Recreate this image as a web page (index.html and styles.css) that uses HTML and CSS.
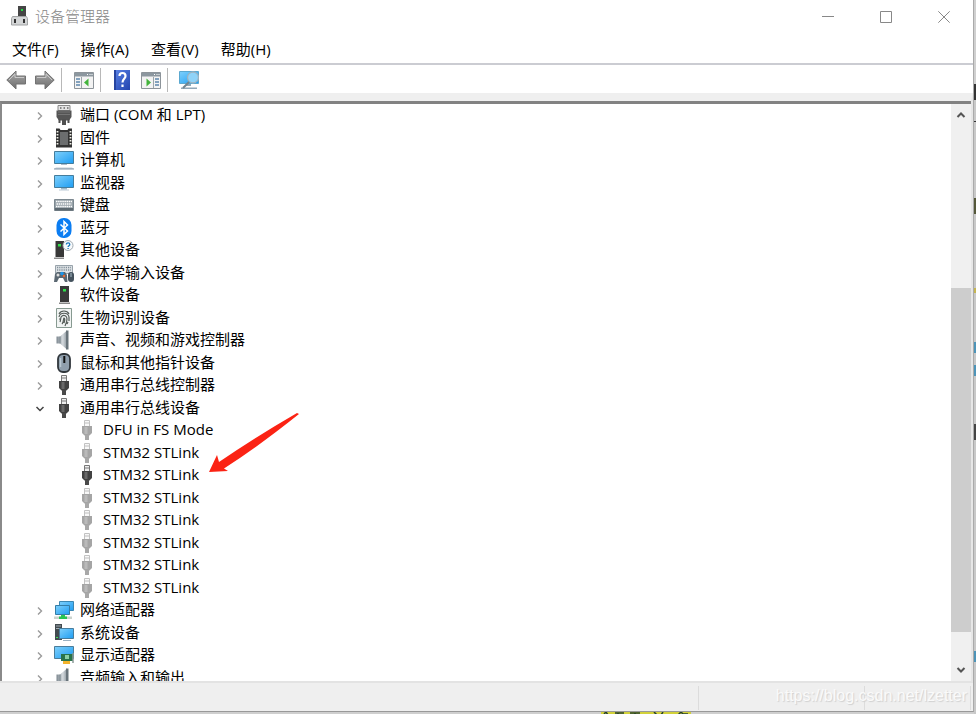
FILE: index.html
```
<!DOCTYPE html>
<html lang="zh-CN">
<head>
    <meta charset="UTF-8">
    <meta name="viewport" content="width=device-width, initial-scale=1.0">
    <title>设备管理器</title>
    <link rel="stylesheet" href="styles.css">
</head>

<body>

    <!-- shared icons -->
    <svg class="icon-defs" aria-hidden="true">
        <defs>
            <linearGradient id="screen" x1="0" y1="0" x2="1" y2="1">
                <stop offset="0" stop-color="#7fd0fb"/>
                <stop offset="1" stop-color="#1e9df3"/>
            </linearGradient>
            <linearGradient id="metal" x1="0" y1="0" x2="0" y2="1">
                <stop offset="0" stop-color="#aaa"/>
                <stop offset="1" stop-color="#6c6c6c"/>
            </linearGradient>
            <linearGradient id="cone" x1="0" y1="0" x2="1" y2="0">
                <stop offset="0" stop-color="#7c878f"/>
                <stop offset="0.6" stop-color="#d5dade"/>
                <stop offset="1" stop-color="#8d979e"/>
            </linearGradient>
            <linearGradient id="book" x1="0" y1="0" x2="1" y2="1">
                <stop offset="0" stop-color="#5a83e6"/>
                <stop offset="1" stop-color="#2243ae"/>
            </linearGradient>
            <symbol id="right" viewBox="0 0 8 10"><path d="M2 1.500l3.500 3.500L2 8.500" fill="none" stroke="#9a9a9a" stroke-width="1.400"/></symbol>
            <symbol id="down" viewBox="0 0 10 8"><path d="M1.500 2L5 5.500 8.500 2" fill="none" stroke="#444" stroke-width="1.500"/></symbol>
            <symbol id="port" viewBox="0 0 20 20">
                <path d="M4 .5h12v5H4z" fill="#e4e4e4" stroke="#888"/>
                <path d="M6 3h1.500m2 0h1.500m2 0h1.500" stroke="#666" stroke-width="1.500"/>
                <path d="M2.500 5.500h15V12L15 15.500H5L2.500 12z" fill="#555"/>
                <path d="M4 7h12M4 9.500h12" stroke="#747474"/>
                <path d="M4.500 14h2v4h-2zM13.500 14h2v4h-2zM8 14h4v6H8z" fill="#505050"/>
            </symbol>
            <symbol id="firmware" viewBox="0 0 20 20">
                <path d="M2 .5h3.500l1 1.500h7l1-1.500H18v19H2z" fill="#333"/>
                <path d="M6 4h8v13H6z" fill="#6b6d6e"/>
                <path d="M3.500 3v15M16.500 3v15" stroke="#f2f2ea" stroke-width="1.800" stroke-dasharray="1.400 1.600"/>
            </symbol>
            <symbol id="monitor" viewBox="0 0 20 20">
                <path d="M.5 2.500h19v12H.5z" fill="url(#screen)" stroke="#447d9d"/>
                <path d="M7 15h6v1.500H7z" fill="#9cb7c9"/><path d="M5 16.500h10v1H5z" fill="#bccbd6"/>
            </symbol>
            <symbol id="computer" viewBox="0 0 20 20">
                <path d="M.5 1.500h19v12H.5z" fill="url(#screen)" stroke="#447d9d"/>
                <path d="M7 14h6v1H7z" fill="#abc"/>
                <path d="M2 17.500h16l2 1.500H0z" fill="#c2ced8"/><path d="M0 18.500h20v1H0z" fill="#8799a8"/>
            </symbol>
            <symbol id="keyboard" viewBox="0 0 20 20">
                <path d="M.5 4.500h19v11H.5z" fill="#98a3aa" stroke="#7c8890"/>
                <path d="M2 6.500h16M2.500 9h15M2 11.500h16" stroke="#fff" stroke-width="1.400" stroke-dasharray="1.500 .600"/>
                <path d="M1 13h18v2.500H1z" fill="#5d6971"/>
            </symbol>
            <symbol id="bluetooth" viewBox="0 0 20 20">
                <rect x="2.500" y="0" width="15" height="20" rx="7" fill="#0b7df2"/>
                <path d="M6.500 6.500l7 6.500-3.500 3.500v-13l3.500 3.500-7 6.500" fill="none" stroke="#fff" stroke-width="1.500"/>
            </symbol>
            <symbol id="unknown" viewBox="0 0 20 20">
                <path d="M1.500 1h8.500v16H1.500z" fill="#383838"/><path d="M0 17.500h10V19H0z" fill="#8b8b8b"/>
                <path d="M4 4h3v2.500H4z" fill="#32dd4a"/>
                <circle cx="14" cy="5.500" r="5" fill="#f7fafc" stroke="#a1aab1"/>
                <path d="M12.400 4.500c0-2.200 3.400-2.200 3.400 0 0 1.400-1.700 1.200-1.700 2.600m0 1v1" fill="none" stroke="#1676bd" stroke-width="1.300"/>
            </symbol>
            <symbol id="hid" viewBox="0 0 20 20">
                <path d="M1.500 2.500h17v8h-17z" fill="#dce1e4" stroke="#98a3ab"/>
                <path d="M3 4.500h14M3 7h14" stroke="#82909a" stroke-width="1.300" stroke-dasharray="1.200 1"/>
                <path d="M0 19l1-8 2-2h8l2 3 .5 7H11l-2-4H5l-2 4z" fill="#5b6872"/>
                <circle cx="4" cy="12" r="1.500" fill="#ddd"/><circle cx="8" cy="10.500" r="1.800" fill="#1d95e9"/><circle cx="10" cy="13" r="1.200" fill="#e76b34"/>
                <rect x="14" y="9" width="6" height="10" rx="3" fill="#44525d"/><path d="M17 10v4" stroke="#a9bdc9"/>
            </symbol>
            <symbol id="software" viewBox="0 0 20 20">
                <path d="M6 1h9v16H6z" fill="#3a3a3a"/><path d="M5 17.500h11V19H5z" fill="#888"/>
                <path d="M9 4h3v2.500H9z" fill="#2ee14a"/>
            </symbol>
            <symbol id="finger" viewBox="0 0 20 20">
                <path d="M2.500.5h15v19h-15z" fill="#f1f4f3" stroke="#879a91"/>
                <path d="M5 6c2-4 8-4 10 0M5 9c1-5 9-5 10 0v4M6 14c1-2 0-5 2-6 2-1.500 5 0 5 3 0 3-1 5-2 7M8 16c2-2 1-5 2-6 1 0 1 2 0 5M6 11H5m8 5l1-2" fill="none" stroke="#555d59" stroke-width="1.200"/>
            </symbol>
            <symbol id="speaker" viewBox="0 0 20 20">
                <path d="M2.500 6.500H6L13 .5v19l-7-6H2.500z" fill="url(#cone)"/>
                <path d="M12 .5h2.500v19H12z" fill="#69747b"/><path d="M6 6.500v7" stroke="#77838a"/>
            </symbol>
            <symbol id="mouse" viewBox="0 0 20 20">
                <rect x="4" y="1" width="12" height="18" rx="5" fill="#8f9eac" stroke="#30363b" stroke-width="1.800"/>
                <path d="M6.500 5v9" stroke="#bac8d3" stroke-width="1.500"/>
                <path d="M10.300 3v7" stroke="#111" stroke-width="2"/>
            </symbol>
            <symbol id="usb" viewBox="0 0 20 20">
                <path d="M7.500.5h5v6h-5z" fill="#eee" stroke="#777"/><path d="M8.500 3h1m1 0h1" stroke="#555" stroke-width="1.500"/>
                <path d="M5 6h10v7l-2.500 2.500h-5L5 13z" fill="#424242"/><path d="M7.500 7h3v7h-3z" fill="#696969"/>
                <path d="M8 15h4v5H8z" fill="#4a4a4a"/>
            </symbol>
            <symbol id="usb-off" viewBox="0 0 20 20">
                <path d="M7.500.5h5v6h-5z" fill="#f8f8f8" stroke="#c2c2c2"/><path d="M8.500 3h1m1 0h1" stroke="#aaa" stroke-width="1.500"/>
                <path d="M5 6h10v7l-2.500 2.500h-5L5 13z" fill="#a5a5a5"/><path d="M7.500 7h3v7h-3z" fill="#bababa"/>
                <path d="M8 15h4v5H8z" fill="#a8a8a8"/>
            </symbol>
            <symbol id="network" viewBox="0 0 20 20">
                <path d="M5.500 1.500h14v9h-14z" fill="url(#screen)" stroke="#3c87b2"/>
                <path d="M1.500 5.500h14v9h-14z" fill="url(#screen)" stroke="#347da7"/>
                <path d="M0 16.500h18V19H0z" fill="#cbd3ce"/><path d="M7 15h4v1.500h2V19H5v-2.500h2z" fill="#28c454"/>
            </symbol>
            <symbol id="system" viewBox="0 0 20 20">
                <path d="M1 1h7v16H1z" fill="#434b50"/><path d="M2 3h5M2 5.500h5" stroke="#a0aaaf"/><path d="M2 14h2v1H2z" fill="#41df54"/>
                <path d="M5.500 5.500h14v10h-14z" fill="url(#screen)" stroke="#487d9d"/>
                <path d="M9 17h8v1H9z" fill="#9bb2c2"/>
            </symbol>
            <symbol id="display" viewBox="0 0 20 20">
                <path d="M.5 1.500h19v12H.5z" fill="url(#screen)" stroke="#4b7d9a"/>
                <path d="M7 9h12v7H7z" fill="#29734a"/><path d="M11 10h4v4h-4z" fill="#8bd0a4"/><path d="M19 8v10" stroke="#8b9a98" stroke-width="1.500"/>
                <path d="M9 16h7v3H9z" fill="#f2b42b"/>
            </symbol>
            <symbol id="arrow" viewBox="0 0 20 20">
                <path d="M.8 10L10 1v5h9.500v8H10v5z" fill="url(#metal)" stroke="#737373" stroke-linejoin="round"/>
                <path d="M3 10l6-6v3.500h9" fill="none" stroke="#c8c8c8"/>
            </symbol>
            <symbol id="pane" viewBox="0 0 20 18">
                <path d="M.5 1.500h19v16H.5z" fill="#f3f3f3" stroke="#8d949a"/>
                <path d="M1 2h18v3.500H1z" fill="#8c979f"/><path d="M13 3.500h1m1.500 0h1m1 0h1" stroke="#fff"/>
            </symbol>
        </defs>
    </svg>

    <div class="window">
        <header class="title-bar">
            <svg class="app-icon" viewBox="0 0 18 20" aria-hidden="true">
                <path d="M7 0h8v12H7z" fill="#454545"/><path d="M10 3h2v2h-2z" fill="#23dd45"/>
                <path d="M1.500 10.500h14l1 2v6.500H.5v-6.500z" fill="#d4d6d7" stroke="#a2a4a5"/>
                <path d="M3 13h2v4H3zM12 13h2v4h-2z" fill="#333"/>
            </svg>
            <span class="title">设备管理器</span>
            <button class="window-button" aria-label="最小化"><svg viewBox="0 0 12 12"><path d="M0 5.500h12"/></svg></button>
            <button class="window-button" aria-label="最大化"><svg viewBox="0 0 12 12"><path d="M.5.5h11v11H.5z"/></svg></button>
            <button class="window-button" aria-label="关闭"><svg viewBox="0 0 12 12"><path d="M.3.3l11.400 11.400M11.700.3L.3 11.700"/></svg></button>
        </header>

        <nav class="menu">
            <button>文件(F)</button>
            <button>操作(A)</button>
            <button>查看(V)</button>
            <button>帮助(H)</button>
        </nav>

        <div class="toolbar">
            <div class="group nav-group">
                <button aria-label="后退"><svg><use href="#arrow"/></svg></button>
                <button aria-label="前进"><svg class="flip"><use href="#arrow"/></svg></button>
            </div>
            <div class="group">
                <button aria-label="显示控制台树"><svg viewBox="0 0 20 20"><use href="#pane" y="1" width="20" height="18"/><path d="M2 9h4M2 12h4M2 15h4" stroke="#5f88ad" stroke-width="1.500"/><path d="M7.500 7v11" stroke="#9ca5aa"/><path d="M14.500 8.500v8L10 12.500z" fill="#42b33b"/></svg></button>
            </div>
            <div class="group">
                <button aria-label="帮助"><svg viewBox="0 0 20 20"><path d="M2 0h16v20H2z" fill="url(#book)"/><path d="M2 0h2v20H2z" fill="#2745a0"/><path d="M7.500 6c0-4 6-4 6 0 0 3-3 2.500-3 6.500m0 2v2.500" fill="none" stroke="#fff" stroke-width="2.200"/></svg></button>
                <button aria-label="显示操作窗格"><svg viewBox="0 0 20 20"><use href="#pane" y="1" width="20" height="18"/><path d="M14 9h4M14 12h4M14 15h4" stroke="#5f88ad" stroke-width="1.500"/><path d="M12.500 7v11" stroke="#9ca5aa"/><path d="M5.500 8.500v8l4.500-4z" fill="#42b33b"/></svg></button>
            </div>
            <div class="group">
                <button aria-label="扫描检测硬件改动"><svg viewBox="0 0 20 20"><path d="M.5 1.500h19v12H.5z" fill="url(#screen)" stroke="#5ba8d0"/><path d="M7 14h5v2H7zM2 17.500h16V19H2z" fill="#91a8b8"/><circle cx="14" cy="7.500" r="5.500" fill="#8fd3f8" stroke="#9cb3c1" stroke-width="1.300"/><path d="M10 12l-6 6" stroke="#73848f" stroke-width="2"/></svg></button>
            </div>
        </div>

        <main class="content">
            <ul class="tree">
                <li><svg class="toggle"><use href="#right"/></svg><svg class="icon"><use href="#port"/></svg><span>端口 (COM 和 LPT)</span></li>
                <li><svg class="toggle"><use href="#right"/></svg><svg class="icon"><use href="#firmware"/></svg><span>固件</span></li>
                <li><svg class="toggle"><use href="#right"/></svg><svg class="icon"><use href="#computer"/></svg><span>计算机</span></li>
                <li><svg class="toggle"><use href="#right"/></svg><svg class="icon"><use href="#monitor"/></svg><span>监视器</span></li>
                <li><svg class="toggle"><use href="#right"/></svg><svg class="icon"><use href="#keyboard"/></svg><span>键盘</span></li>
                <li><svg class="toggle"><use href="#right"/></svg><svg class="icon"><use href="#bluetooth"/></svg><span>蓝牙</span></li>
                <li><svg class="toggle"><use href="#right"/></svg><svg class="icon"><use href="#unknown"/></svg><span>其他设备</span></li>
                <li><svg class="toggle"><use href="#right"/></svg><svg class="icon"><use href="#hid"/></svg><span>人体学输入设备</span></li>
                <li><svg class="toggle"><use href="#right"/></svg><svg class="icon"><use href="#software"/></svg><span>软件设备</span></li>
                <li><svg class="toggle"><use href="#right"/></svg><svg class="icon"><use href="#finger"/></svg><span>生物识别设备</span></li>
                <li><svg class="toggle"><use href="#right"/></svg><svg class="icon"><use href="#speaker"/></svg><span>声音、视频和游戏控制器</span></li>
                <li><svg class="toggle"><use href="#right"/></svg><svg class="icon"><use href="#mouse"/></svg><span>鼠标和其他指针设备</span></li>
                <li><svg class="toggle"><use href="#right"/></svg><svg class="icon"><use href="#usb"/></svg><span>通用串行总线控制器</span></li>
                <li><svg class="toggle"><use href="#down"/></svg><svg class="icon"><use href="#usb"/></svg><span>通用串行总线设备</span></li>
                <li class="child"><svg class="icon"><use href="#usb-off"/></svg><span>DFU in FS Mode</span></li>
                <li class="child"><svg class="icon"><use href="#usb-off"/></svg><span>STM32 STLink</span></li>
                <li class="child"><svg class="icon"><use href="#usb"/></svg><span>STM32 STLink</span></li>
                <li class="child"><svg class="icon"><use href="#usb-off"/></svg><span>STM32 STLink</span></li>
                <li class="child"><svg class="icon"><use href="#usb-off"/></svg><span>STM32 STLink</span></li>
                <li class="child"><svg class="icon"><use href="#usb-off"/></svg><span>STM32 STLink</span></li>
                <li class="child"><svg class="icon"><use href="#usb-off"/></svg><span>STM32 STLink</span></li>
                <li class="child"><svg class="icon"><use href="#usb-off"/></svg><span>STM32 STLink</span></li>
                <li><svg class="toggle"><use href="#right"/></svg><svg class="icon"><use href="#network"/></svg><span>网络适配器</span></li>
                <li><svg class="toggle"><use href="#right"/></svg><svg class="icon"><use href="#system"/></svg><span>系统设备</span></li>
                <li><svg class="toggle"><use href="#right"/></svg><svg class="icon"><use href="#display"/></svg><span>显示适配器</span></li>
                <li><svg class="toggle"><use href="#right"/></svg><svg class="icon"><use href="#speaker"/></svg><span>音频输入和输出</span></li>
            </ul>

            <svg class="pointer" viewBox="0 0 90 60" aria-hidden="true">
                <path d="M0 59L8 42l2 7Q50 22 88 0l2 1Q50 33 15 55.500l4 2.500z" fill="#fb2314"/>
            </svg>

            <div class="scrollbar">
                <button aria-label="向上滚动"><svg viewBox="0 0 10 8"><path d="M1.500 6L5 2.500 8.500 6"/></svg></button>
                <div class="track"><div class="thumb"></div></div>
                <button aria-label="向下滚动"><svg viewBox="0 0 10 8"><path d="M1.500 2L5 5.500 8.500 2"/></svg></button>
            </div>
        </main>

        <footer class="status-bar">
            <div class="panel"></div>
            <div class="panel medium"></div>
            <div class="panel small"></div>
            <span class="watermark">https://blog.csdn.net/lzetter</span>
        </footer>
    </div>

    <!-- sliver of the page behind the window -->
    <div class="behind">
        <svg viewBox="0 0 90 3" aria-hidden="true"><path d="M0 0h90v3H0z" fill="#d2d13a"/><path d="M3 2l2-2 2 3M14 1h9M17 1v2m12-2h10m-5 0v2m19-3l3 3m4 0l2-3m15 3l3-3 3 3m-1-1h5" fill="none" stroke="#25402a" stroke-width="1.500"/></svg>
    </div>

</body>
</html>
```

FILE: styles.css
```
* {
    box-sizing: border-box;
}

body {
    margin: 0;
    height: 100vh;
    display: flex;
    flex-direction: column;
    overflow: hidden;
    padding-right: 2px;
    font-family: "Open Sans", "Noto Sans CJK SC", sans-serif;
    font-size: 15px;
    line-height: 20px;
    color: #000;
    background: linear-gradient(#d0d0d0 84px, #333 84px, #333 100px, #c8c8c8 100px, #c8c8c8 121px, #333 121px, #333 122px, #c8c8c8 122px, #c8c8c8 198px, #55583a 198px, #55583a 214px, #c8c8c8 214px, #c8c8c8 288px, #c5b552 288px, #c5b552 293px, #c8c8c8 293px, #c8c8c8 342px, #4d94b8 342px, #4d94b8 353px, #c8c8c8 353px, #c8c8c8 365px, #4d94b8 365px, #4d94b8 376px, #c8c8c8 376px, #c8c8c8 424px, #444 424px, #444 440px, #c8c8c8 440px, #c8c8c8 651px, #4d94b8 651px, #4d94b8 662px, #c8c8c8 662px);
}

button {
    border: none;
    padding: 0;
    background: none;
    font: inherit;
    color: inherit;
}

svg {
    display: block;
}

.icon-defs {
    position: absolute;
    width: 0;
    height: 0;
}

.window {
    flex: 1;
    min-height: 0;
    display: flex;
    flex-direction: column;
    background: #fff;
    border-right: 1px solid #aaa;
    border-bottom: 1px solid #999;
}

/* title bar */
.title-bar {
    display: flex;
    align-items: center;
    height: 34px;
    padding-left: 11px;
}

.app-icon {
    width: 18px;
    height: 20px;
    margin-bottom: 2px;
}

.title {
    flex: 1;
    padding: 0 0 2px 6px;
    font-weight: 300;
    color: #888;
}

.window-button {
    display: flex;
    align-items: center;
    justify-content: center;
    width: 58px;
    height: 34px;
}

.window-button svg {
    width: 12px;
    height: 12px;
    fill: none;
    stroke: #888;
}

/* menu */
.menu {
    display: flex;
    gap: 2px;
    height: 31px;
    padding: 1px 0 0 2px;
    border-bottom: 2px solid #cbccd2;
}

.menu button {
    padding: 0 10px;
}

/* toolbar */
.toolbar {
    display: flex;
    height: 28px;
    padding: 3px 0 1px;
}

.group {
    display: flex;
    align-items: center;
    gap: 9px;
    padding: 0 6px 0 12px;
}

.nav-group {
    padding-left: 6px;
}

.group + .group {
    border-left: 1px solid #b8b8b8;
}

.group + .group + .group {
    padding-left: 11px;
}

.toolbar svg {
    width: 20px;
    height: 20px;
}

.toolbar .flip {
    transform: scaleX(-1);
}

/* device tree */
.content {
    position: relative;
    flex: 1;
    min-height: 0;
    display: flex;
    overflow: hidden;
    border-top: 8px solid #efefef;
    border-right: 2px solid #e6e6e6;
    border-bottom: 2px solid #e3e3e3;
}

.tree {
    flex: 1;
    display: grid;
    grid-auto-rows: 22px 23px;
    align-content: start;
    margin: 0;
    padding: 0 0 0 33px;
    list-style: none;
    overflow: hidden;
    border-top: 3px solid #828282;
    border-left: 2px solid #8a8a8a;
}

.tree li {
    display: flex;
    align-items: center;
    white-space: pre;
}

.tree span {
    padding-bottom: 2px;
}

.tree .child {
    padding-left: 42px;
}

.toggle {
    width: 10px;
    height: 10px;
    margin: 2px 9px 0 0;
}

.icon {
    width: 20px;
    height: 20px;
    margin-right: 6px;
}

.pointer {
    position: absolute;
    left: 209px;
    top: 312px;
    width: 90px;
    height: 60px;
}

.scrollbar {
    display: flex;
    flex-direction: column;
    width: 20px;
    background: #f0f0f0;
    border-top: 3px solid #828282;
}

.scrollbar button {
    display: flex;
    align-items: center;
    justify-content: center;
    height: 22px;
}

.scrollbar svg {
    width: 10px;
    height: 8px;
    fill: none;
    stroke: #555;
    stroke-width: 2;
}

.track {
    flex: 1;
    display: flex;
    flex-direction: column;
    justify-content: flex-end;
    padding-bottom: 27px;
}

.thumb {
    height: 68%;
    background: #cdcdcd;
}

/* status bar */
.status-bar {
    position: relative;
    display: flex;
    height: 28px;
    padding: 3px 2px 1px 0;
    background: #efefef;
}

.panel {
    flex: 1;
    border-right: 1px solid #dcdcdc;
}

.medium {
    flex: 0 0 166px;
}

.small {
    flex: 0 0 106px;
}

.watermark {
    position: absolute;
    right: 6px;
    top: 3px;
    font-family: "Liberation Sans", Arial, sans-serif;
    font-size: 16px;
    color: #fafafa;
    text-shadow: 1px 1px 1px #d0d0d0;
}

.behind {
    display: flex;
    justify-content: center;
    height: 2px;
    padding-left: 318px;
    background: #cfcfcf;
    overflow: hidden;
}

.behind svg {
    width: 90px;
    height: 3px;
}
```
